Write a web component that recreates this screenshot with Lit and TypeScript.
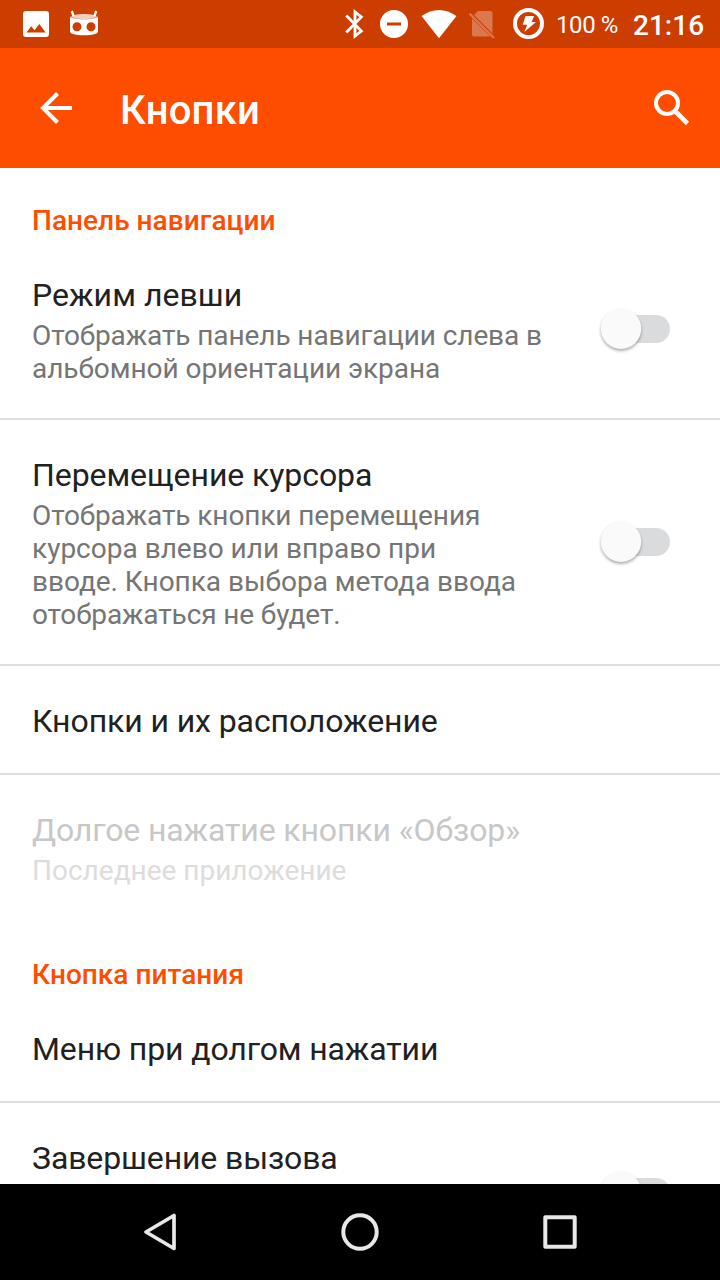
import { LitElement, html, css, svg, nothing } from "lit";
import { customElement, property } from "lit/decorators.js";
import { styleMap } from "lit/directives/style-map.js";

interface Line { text: string; tracking: number }

@customElement("status-bar")
class StatusBar extends LitElement {
  static styles = css`
    :host { display: block; height: 48px; background: #cc3d00; color: #fff; }
    .bar { display: flex; height: 48px; }
    .icons { flex: none; width: 550px; height: 48px; display: block; }
    .battery { flex: none; width: 77px; padding-left: 6px; font-size: 24px; letter-spacing: -0.4px; line-height: 50px; white-space: nowrap; }
    .time { font-size: 28px; font-weight: 500; line-height: 51px; white-space: nowrap; }
  `;
  render() {
    return html`<div class="bar">
      <svg class="icons" viewBox="0 0 550 48" fill="#fff">
        <path fill-rule="evenodd" d="M26 11h20a3 3 0 0 1 3 3v20a3 3 0 0 1-3 3H26a3 3 0 0 1-3-3V14a3 3 0 0 1 3-3zM26.500 32.500h19.200l-6.400-8.500-4.800 6.200-3.300-4z" />
        <path d="M71.800 11l1.700 5M96.200 11l-1.700 5" fill="none" stroke="#fff" stroke-width="2.400" />
        <path d="M71 16.500c3-3.500 23-3.500 26 0c-3 3.500-23 3.500-26 0z" opacity=".75" />
        <path fill-rule="evenodd" d="M70 16.500c3 3.600 25 3.600 28 0V31c0 1.500-1 2.500-2.500 2.800-6 2-17 2-23 0C71 33.500 70 32.500 70 31zM77 22.300a4.500 4.500 0 1 0 0 9 4.500 4.500 0 0 0 0-9zM91 22.300a4.500 4.500 0 1 0 0 9 4.500 4.500 0 0 0 0-9z" />
        <path d="M346.300 15.500L361.300 31l-6.300 5V12l6.300 5-15 15.500" fill="none" stroke="#fff" stroke-width="2.800" />
        <path fill-rule="evenodd" d="M394 10a14 14 0 1 0 0 28 14 14 0 0 0 0-28zM387 22.500h14v3h-14z" />
        <path d="M421.500 16Q439 4 456.500 16L439 38.300z" />
        <g opacity=".3">
          <path d="M478 11h12a2.500 2.500 0 0 1 2.500 2.500v20.100l-18.500-18.500zM472 18.200l18.300 18.300H474a2 2 0 0 1-2-2z" />
          <path d="M469.500 13.500l24.500 24.500" fill="none" stroke="#fff" stroke-width="2.300" />
        </g>
        <circle cx="528.500" cy="23.500" r="13.500" fill="none" stroke="#fff" stroke-width="4" />
        <path d="M525.500 16h8.700l-2.600 6h4.400l-11.700 10 2.900-7.300h-4.400z" />
      </svg>
      <span class="battery">100 %</span><span class="time">21:16</span>
    </div>`;
  }
}

@customElement("tool-bar")
class ToolBar extends LitElement {
  static styles = css`
    :host { display: block; background: #ff4d00; color: #fff; }
    .bar { display: flex; align-items: center; height: 120px; padding: 0 24px 0 32px; }
    .icon { width: 48px; height: 48px; display: block; flex: none; }
    .title { flex: 1; margin-left: 40px; padding-top: 6px; font-size: 40px; font-weight: 500; letter-spacing: 0.2px; line-height: 48px; }
  `;
  render() {
    return html`<div class="bar">
      <svg class="icon" viewBox="0 0 48 48"><path d="M40 24H11M25.500 9.500L11 24l14.500 14.500" fill="none" stroke="#fff" stroke-width="4" /></svg>
      <span class="title">Кнопки</span>
      <svg class="icon" viewBox="0 0 48 48" fill="none" stroke="#fff" stroke-width="4"><circle cx="19" cy="19" r="11" /><path d="M27 27l12.500 12.500" stroke-width="4.600" /></svg>
    </div>`;
  }
}

@customElement("setting-row")
class SettingRow extends LitElement {
  @property({ attribute: false }) heading: Line = { text: "", tracking: 0 };
  @property({ attribute: false }) lines: Line[] = [];
  @property({ type: Boolean }) toggle = false;
  @property({ type: Boolean }) last = false;
  @property({ type: Boolean, reflect: true }) disabled = false;
  @property({ type: Boolean, reflect: true }) tall = false;

  static styles = css`
    :host { display: block; }
    .row { box-sizing: border-box; display: flex; align-items: center; padding: 32px 48px 32px 32px; border-bottom: 2px solid #dedede; }
    .last { border-color: transparent; }
    .text { flex: 1; }
    .title { padding-top: 4px; font-size: 32px; line-height: 39px; color: #212121; white-space: nowrap; }
    .summary { font-size: 28px; line-height: 33px; color: #757575; padding: 4px 0 1px; white-space: nowrap; }
    .switch { display: block; flex: none; width: 76px; height: 56px; overflow: visible; }
    .thumb { filter: drop-shadow(0 2px 1.500px rgba(0, 0, 0, 0.32)); }
    :host([disabled]) .title { color: #c7c7c7; }
    :host([disabled]) .summary { color: #dcdcdc; }
    :host([tall]) .row { height: 180px; align-items: center; }
    :host([tall]) .text { align-self: flex-start; }
  `;
  private line(cls: string, l: Line) {
    return html`<div class=${cls} style=${styleMap({ letterSpacing: `${l.tracking}px` })}>${l.text}</div>`;
  }
  render() {
    return html`<div class="row ${this.last ? "last" : ""}">
      <div class="text">
        ${this.line("title", this.heading)}
        ${this.lines.length
          ? html`<div class="summary">${this.lines.map((l) => this.line("line", l))}</div>`
          : nothing}
      </div>
      ${this.toggle
        ? html`<svg class="switch" viewBox="0 0 76 56">${svg`
            <rect x="10" y="14" width="64" height="28" rx="14" fill="#dadbdc" />
            <circle class="thumb" cx="25" cy="27.700" r="20.200" fill="#fafafa" />`}</svg>`
        : nothing}
    </div>`;
  }
}

@customElement("nav-bar")
class NavBar extends LitElement {
  static styles = css`
    :host { display: block; background: #000; }
    .bar { display: flex; justify-content: center; gap: 136px; height: 96px; align-items: center; }
    .key { width: 64px; height: 64px; display: block; fill: none; stroke: #e8e8e8; stroke-width: 4; stroke-linejoin: round; }
  `;
  render() {
    return html`<div class="bar">
      <svg class="key" viewBox="0 0 64 64"><path d="M18 32L46 15.500v33z" stroke-width="3.700" /></svg>
      <svg class="key" viewBox="0 0 64 64"><circle cx="32" cy="32" r="16.700" /></svg>
      <svg class="key" viewBox="0 0 64 64"><rect x="17.300" y="17.300" width="29.400" height="29.400" /></svg>
    </div>`;
  }
}

const line = (text: string, tracking = 0): Line => ({ text, tracking });

@customElement("app-root")
class AppRoot extends LitElement {
  static styles = css`
    :host { display: flex; flex-direction: column; width: 720px; height: 1280px; overflow: hidden; background: #fff; font-family: Roboto, sans-serif; }
    .list { flex: 1; min-height: 0; overflow: hidden; }
    .category { box-sizing: border-box; height: 72px; padding: 36px 32px 0; font-size: 28px; font-weight: 500; line-height: 33px; letter-spacing: 0.03px; color: #ff4d00; }
  `;
  render() {
    return html`
      <status-bar></status-bar>
      <tool-bar></tool-bar>
      <div class="list">
        <div class="category">Панель навигации</div>
        <setting-row .heading=${line("Режим левши", 0.05)} .lines=${[line("Отображать панель навигации слева в", -0.1), line("альбомной ориентации экрана", -0.06)]} toggle></setting-row>
        <setting-row .heading=${line("Перемещение курсора", -0.07)} .lines=${[line("Отображать кнопки перемещения", -0.1), line("курсора влево или вправо при"), line("вводе. Кнопка выбора метода ввода", -0.03), line("отображаться не будет.", -0.12)]} toggle></setting-row>
        <setting-row .heading=${line("Кнопки и их расположение", -0.09)}></setting-row>
        <setting-row .heading=${line("Долгое нажатие кнопки «Обзор»", -0.12)} .lines=${[line("Последнее приложение")]} disabled last></setting-row>
        <div class="category">Кнопка питания</div>
        <setting-row .heading=${line("Меню при долгом нажатии", -0.12)}></setting-row>
        <setting-row .heading=${line("Завершение вызова", -0.12)} toggle tall></setting-row>
      </div>
      <nav-bar></nav-bar>
    `;
  }
}
